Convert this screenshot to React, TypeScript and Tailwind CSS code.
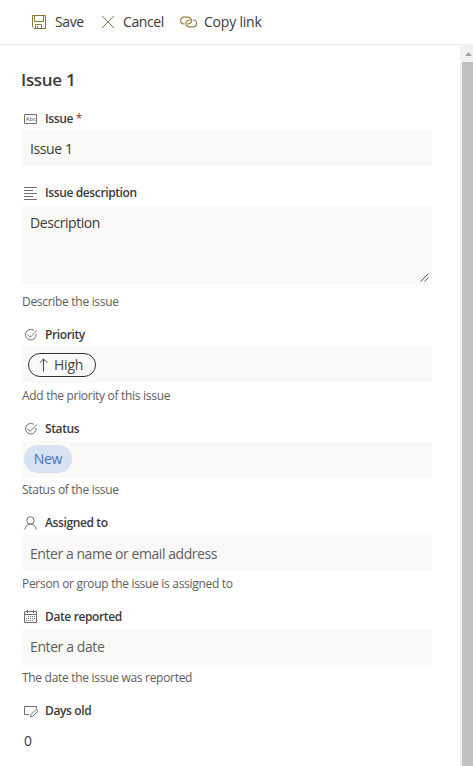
import type { ReactNode } from "react";

const stroke = { fill: "none", stroke: "currentColor", strokeWidth: 1 };

const SaveIcon = () => (
  <svg width="16" height="16" viewBox="0 0 16 16" className="text-[#8a7532]" {...stroke}>
    <path d="M1.5 1.5h13v13H3.2L1.5 12.8zM3.5 1.5v6h9v-6M4.5 14.5v-4h6v4M6.5 12v2.5" />
  </svg>
);
const CancelIcon = () => (
  <svg width="14" height="14" viewBox="0 0 14 14" className="text-[#8a7f50]" {...stroke}>
    <path d="M1 1l12 12M13 1L1 13" />
  </svg>
);
const LinkIcon = () => (
  <svg width="18" height="14" viewBox="0 0 18 14" className="text-[#94803c]" {...stroke} strokeWidth={1.2}>
    <path d="M4.6 9H4A3.4 3.4 0 0 1 4 2.2h4A3.4 3.4 0 0 1 8 9H7.2M12.6 5h.6a3.4 3.4 0 0 1 0 6.8H9.4a3.4 3.4 0 0 1 0-6.8h.8" />
  </svg>
);
const TextIcon = () => (
  <svg width="14" height="14" viewBox="0 0 14 14" {...stroke}>
    <path d="M.5 2.5h12v9H.5z" />
    <text x="1.8" y="9" fontSize="5.5" textLength="9.5" fill="currentColor" stroke="none" fontFamily="Open Sans, sans-serif">Abc</text>
  </svg>
);
const LinesIcon = () => (
  <svg width="14" height="14" viewBox="0 0 14 14" {...stroke}>
    <path d="M0 1.5h13M0 4.5h9M0 7.5h13M0 10.5h9M0 13.5h13" />
  </svg>
);
const ChoiceIcon = () => (
  <svg width="14" height="14" viewBox="0 0 14 14" {...stroke}>
    <path d="M9.8 2.3A5.3 5.3 0 1 0 12.1 6M3.6 6.7l2.6 2.7L12.7 2.5" />
  </svg>
);
const PersonIcon = () => (
  <svg width="14" height="14" viewBox="0 0 14 14" {...stroke}>
    <circle cx="6.5" cy="4.5" r="3.7" />
    <path d="M.8 13.5C1.2 10.2 3.5 8.2 6.5 8.2s5.3 2 5.7 5.3" />
  </svg>
);
const CalendarIcon = () => (
  <svg width="14" height="14" viewBox="0 0 14 14" {...stroke}>
    <path d="M.5 1.5h12v11H.5zM.5 4.5h12M3.5 0v3M9.5 0v3" />
    <path d="M4 6.5h7M2 8.5h9M2 10.5h7" strokeDasharray="1 1" />
  </svg>
);
const EditIcon = () => (
  <svg width="14" height="14" viewBox="0 0 14 14" {...stroke}>
    <path d="M5 10.5H.5v-8h12v2.2M6.4 13l.7-2.6 4.6-4.6a1.1 1.1 0 0 1 1.7 1.7l-4.6 4.7z" />
  </svg>
);

function Command({ icon, children }: { icon: ReactNode; children: ReactNode }) {
  return (
    <button className="flex items-center text-[14px] leading-5 text-[#3b3a39]">
      {icon}
      {children}
    </button>
  );
}

function Label({ icon, children }: { icon: ReactNode; children: ReactNode }) {
  return (
    <div className="flex h-6 items-center gap-[7px] pl-[2px] text-[12px] leading-4 font-semibold tracking-[-0.38px] text-[#3b3a39]">
      <span className="w-[14px] text-[#707070]">{icon}</span>
      <span className="whitespace-nowrap">{children}</span>
    </div>
  );
}

const Help = ({ children }: { children: ReactNode }) => (
  <div className="flex h-[26px] items-center text-[12px] tracking-[-0.3px] whitespace-nowrap text-[#605e5c]">
    {children}
  </div>
);

export default function App() {
  return (
    <div className="flex h-[766px] w-[473px] flex-col overflow-hidden bg-white font-['Open_Sans','Noto_Sans',sans-serif]">
      <header className="flex h-[45px] shrink-0 items-center border-b border-[#e6e6e6] pl-[31px]">
        <Command icon={<SaveIcon />}>
          <span className="ml-[8px] w-[46px] text-left tracking-[-0.4px]">Save</span>
        </Command>
        <Command icon={<CancelIcon />}>
          <span className="ml-[8px] w-[57px] text-left tracking-[-0.4px]">Cancel</span>
        </Command>
        <Command icon={<LinkIcon />}>
          <span className="ml-[6px] tracking-[-0.2px] whitespace-nowrap">Copy link</span>
        </Command>
      </header>
      <div className="flex min-h-0 flex-1">
        <main className="w-[460px] shrink-0 pr-[28px] pl-[22px]">
          <h1 className="flex h-[62px] items-center pt-[7px] text-[17px] font-semibold text-[#3b3a39]">
            <span className="-ml-px tracking-[-0.3px]">Issue 1</span>
          </h1>
          <section className="mb-[14px]">
            <Label icon={<TextIcon />}>
              Issue <span className="font-normal text-[#a4262c]">*</span>
            </Label>
            <div className="flex h-9 items-center bg-[#faf9f8] px-2 pb-px text-[14px] tracking-[-0.4px] text-[#3b3a39]">
              Issue 1
            </div>
          </section>
          <section className="mb-[3px]">
            <Label icon={<LinesIcon />}>Issue description</Label>
            <div className="mt-px flex h-[78px] justify-between bg-[#faf9f8] pt-[7px] pr-[3px] pl-2 text-[14px] leading-5 tracking-[-0.43px] text-[#3b3a39]">
              <span>Description</span>
              <svg width="9" height="9" viewBox="0 0 9 9" className="mb-[2px] self-end text-[#555]" {...stroke}>
                <path d="M.5 8.5l8-8M4.5 8.5l4-4" />
              </svg>
            </div>
            <div className="py-[5px]">
              <Help>Describe the issue</Help>
            </div>
          </section>
          <section className="mb-2">
            <Label icon={<ChoiceIcon />}>Priority</Label>
            <div className="flex h-9 items-center bg-[#faf9f8] pl-[6px]">
              <div className="flex h-6 w-[68px] items-center rounded-full border border-[#323130] pb-px pl-[10px] text-[14px] tracking-[-0.2px] text-[#484644]">
                <svg width="9" height="14" viewBox="0 0 9 14" className="mt-px mr-[6px]" {...stroke}>
                  <path d="M4.5 13.5V1M.8 4.7L4.5 1l3.7 3.7" />
                </svg>
                High
              </div>
            </div>
            <Help>Add the priority of this issue</Help>
          </section>
          <section className="mb-2">
            <Label icon={<ChoiceIcon />}>Status</Label>
            <div className="flex h-9 items-center bg-[#faf9f8] pl-[2px]">
              <div className="flex h-7 w-[48px] items-center justify-center rounded-full bg-[#d6e3f2] pb-px text-[14px] tracking-[-0.3px] text-[#4c6fc4]">
                New
              </div>
            </div>
            <Help>Status of the issue</Help>
          </section>
          <section className="mb-2">
            <Label icon={<PersonIcon />}>Assigned to</Label>
            <div className="flex h-9 items-center bg-[#faf9f8] px-2 text-[14px] tracking-[-0.44px] text-[#605e5c]">
              Enter a name or email address
            </div>
            <Help>Person or group the issue is assigned to</Help>
          </section>
          <section className="mb-2">
            <Label icon={<CalendarIcon />}>Date reported</Label>
            <div className="flex h-9 items-center bg-[#faf9f8] px-2 pb-px text-[14px] tracking-[-0.4px] text-[#605e5c]">
              Enter a date
            </div>
            <Help>The date the issue was reported</Help>
          </section>
          <section>
            <Label icon={<EditIcon />}>Days old</Label>
            <div className="flex h-9 items-center pb-px pl-[2px] text-[14px] text-[#3b3a39]">0</div>
          </section>
        </main>
        <div className="-mt-px flex flex-1 flex-col bg-[#f1f1f1]">
          <div className="flex h-[18px] shrink-0 items-center pl-[5px]">
            <svg width="7" height="4" viewBox="0 0 7 4" className="mt-[2px] text-[#a3a3a3]" fill="currentColor">
              <path d="M0 4L3.5 0 7 4z" />
            </svg>
          </div>
          <div className="ml-[2px] flex-1 bg-[#c1c1c1]" />
        </div>
      </div>
    </div>
  );
}
